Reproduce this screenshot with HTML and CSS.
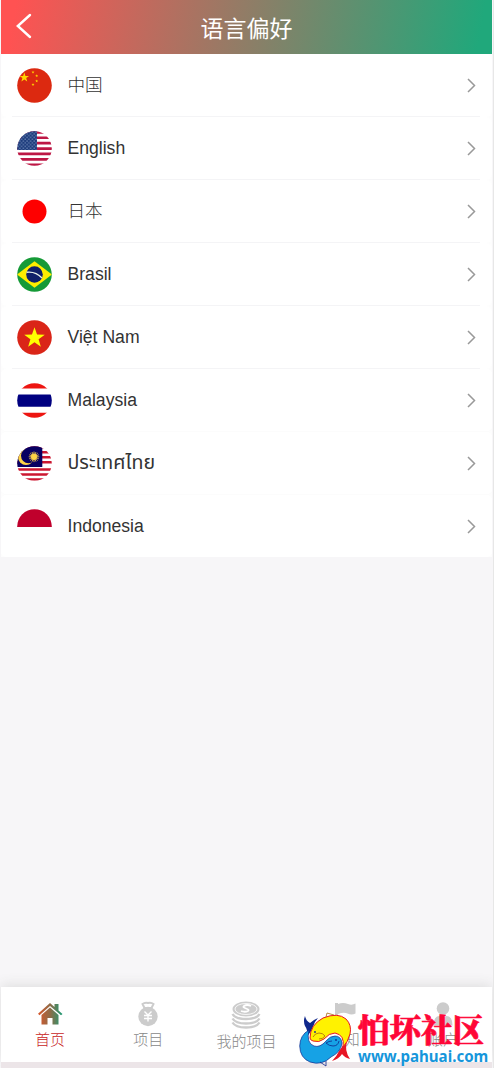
FILE: index.html
```html
<!DOCTYPE html>
<html lang="zh-CN">
<head>
<meta charset="utf-8">
<title>语言偏好</title>
<link rel="stylesheet" href="styles.css">
</head>
<body>
<svg class="defs" width="0" height="0">
  <defs>
    <clipPath id="round"><circle cx="17.5" cy="17.5" r="17.3"/></clipPath>
    <path id="star" d="M0-10 2.35-3.24 9.5-3.09 3.8 1.24 5.88 8.1 0 4-5.88 8.1-3.8 1.24-9.5-3.09-2.35-3.24Z"/>
    <path id="chev" d="M1 1 7.5 7.5 1 14"/>
    <pattern id="dots" width="3.6" height="3.6" patternUnits="userSpaceOnUse"><circle cx="1" cy="1" r=".65" fill="#a9bfe0"/><circle cx="2.8" cy="2.8" r=".65" fill="#a9bfe0"/></pattern>
    <linearGradient id="homeFill"><stop offset="0" stop-color="#d9572c"/><stop offset=".5" stop-color="#8d6c48"/><stop offset="1" stop-color="#1b9c75"/></linearGradient>
  </defs>
</svg>
<div class="app">
  <header class="header">
    <svg class="back" width="18" height="28" viewBox="0 0 18 28"><path d="M15 3 2.800 14 15 25"/></svg>
    <h1 class="title">语言偏好</h1>
  </header>
  <main class="list">
    <div class="row">
      <svg class="flag" viewBox="0 0 35 35"><g clip-path="url(#round)"><path fill="#dc2910" d="M0 0h35v35H0z"/><g fill="#ffd500"><use href="#star" transform="translate(7.300 9.500) scale(.5)"/><use href="#star" transform="translate(16 4.200) scale(.16)"/><use href="#star" transform="translate(19.700 7.800) scale(.16)"/><use href="#star" transform="translate(19.700 13) scale(.16)"/><use href="#star" transform="translate(16 16.500) scale(.16)"/></g></g></svg>
      <span class="name">中国</span><svg class="arrow" viewBox="0 0 9 15"><use href="#chev"/></svg>
    </div>
    <div class="row">
      <svg class="flag" viewBox="0 0 35 35"><g clip-path="url(#round)"><path fill="#fff" d="M0 0h35v35H0z"/><path stroke="#bd1745" stroke-width="2.700" d="M0 1.350h35M0 6.750h35M0 12.150h35M0 17.550h35M0 22.950h35M0 28.350h35M0 33.750h35"/><path fill="#1d3c7c" d="M0 0h20v18.900H0z"/><path fill="url(#dots)" d="M0 0h20v18.900H0z"/></g></svg>
      <span class="name">English</span><svg class="arrow" viewBox="0 0 9 15"><use href="#chev"/></svg>
    </div>
    <div class="row">
      <svg class="flag" viewBox="0 0 35 35"><circle cx="17.500" cy="17.500" r="12" fill="#fe0000"/></svg>
      <span class="name">日本</span><svg class="arrow" viewBox="0 0 9 15"><use href="#chev"/></svg>
    </div>
    <div class="row">
      <svg class="flag" viewBox="0 0 35 35"><g clip-path="url(#round)"><path fill="#159a37" d="M0 0h35v35H0z"/><path fill="#ffed00" d="M17.500 4.300 35 17.500 17.500 30.700 0 17.500z"/><circle cx="17.500" cy="17.500" r="8.300" fill="#10206a"/><path fill="none" stroke="#e6efe8" stroke-width="1.400" d="M9.600 15.300q9-1.200 15.400 5.700"/></g></svg>
      <span class="name">Brasil</span><svg class="arrow" viewBox="0 0 9 15"><use href="#chev"/></svg>
    </div>
    <div class="row">
      <svg class="flag" viewBox="0 0 35 35"><g clip-path="url(#round)"><path fill="#da2518" d="M0 0h35v35H0z"/><use href="#star" fill="#ff0" transform="translate(17.500 18) scale(1.080)"/></g></svg>
      <span class="name">Việt Nam</span><svg class="arrow" viewBox="0 0 9 15"><use href="#chev"/></svg>
    </div>
    <div class="row faint">
      <svg class="flag" viewBox="0 0 35 35"><g clip-path="url(#round)"><path fill="#fff" d="M0 0h35v35H0z"/><path fill="#ed1511" d="M0 0h35v5.500H0zM0 29.800h35V35H0z"/><path fill="#000080" d="M0 11.500h35v12.300H0z"/></g></svg>
      <span class="name">Malaysia</span><svg class="arrow" viewBox="0 0 9 15"><use href="#chev"/></svg>
    </div>
    <div class="row faint">
      <svg class="flag" viewBox="0 0 35 35"><g clip-path="url(#round)"><path fill="#fff" d="M0 0h35v35H0z"/><path stroke="#cc1730" stroke-width="2.500" d="M0 1.250h35M0 6.250h35M0 11.250h35M0 16.250h35M0 23.500h35M0 28.500h35M0 33.500h35"/><path fill="#080062" d="M0 0h25.300v21H0z"/><circle cx="9" cy="11" r="8" fill="#ffd447"/><circle cx="11.500" cy="9.800" r="7.500" fill="#080062"/><g stroke="#ffd447" stroke-width=".8"><circle cx="17" cy="10.800" r="2.800" fill="#ffd447"/><path d="M17 5.500v10.600M11.700 10.800h10.600M13.200 7l7.600 7.600M13.200 14.600 20.800 7M15 6l4 9.600M12.200 8.800l9.600 4M12.200 12.800l9.600-4M15 15.600l4-9.600"/></g></g></svg>
      <span class="name thai">ประเทศไทย</span><svg class="arrow" viewBox="0 0 9 15"><use href="#chev"/></svg>
    </div>
    <div class="row faint">
      <svg class="flag" viewBox="0 0 35 35"><g clip-path="url(#round)"><path fill="#c0002c" d="M0 0h35v18H0z"/></g></svg>
      <span class="name">Indonesia</span><svg class="arrow" viewBox="0 0 9 15"><use href="#chev"/></svg>
    </div>
  </main>
  <nav class="tabs">
    <div class="tab active"><svg width="26" height="26" viewBox="0 0 26 26"><path fill="url(#homeFill)" d="M1 12.700 13 2l4.500 4V3h4v6.500l4 3.500-1.500 1.300L13 5 2.500 14.300zM4.500 14 13 6.500l8.500 7.500v9.500H15.500V17h-5v6.500h-6z"/></svg><span>首页</span></div>
    <div class="tab"><svg width="26" height="26" viewBox="0 0 26 26"><path d="M9.500 7 7.500 3q2.500-2 5.500-1 3-1 5.500 1l-2 4z" fill="none" stroke="#ccc" stroke-width="2"/><circle cx="13" cy="15.500" r="9.700" fill="#ccc"/><path d="M9.500 10.500 13 14l3.500-3.500M13 14v6.500M9 14.500h8M9 17.500h8" fill="none" stroke="#fff" stroke-width="1.400"/></svg><span>项目</span></div>
    <div class="tab"><svg width="30" height="28" viewBox="0 0 30 28"><ellipse cx="15" cy="8" rx="13.500" ry="7.500" fill="#ccc"/><ellipse cx="15" cy="8" rx="11" ry="5.500" fill="none" stroke="#fff" stroke-width=".8"/><path d="M20 5q-4-2-7 0c-3 2 7 3 4 5q-3 1.500-7 0" fill="none" stroke="#fff" stroke-width="1.800"/><path d="M1.500 13q3 5 13.500 5t13.500-5M1.500 17.500q3 5 13.500 5t13.500-5M1.500 21.500q3 5 13.500 5t13.500-5" fill="none" stroke="#ccc" stroke-width="2.400"/></svg><span>我的项目</span></div>
    <div class="tab"><svg width="26" height="26" viewBox="0 0 26 26"><path fill="#ccc" d="M3 2h3v22H3zM6 3q5-2 10 0 4 1.500 7.500-.5v10q-4 2-8 0-4-1.500-9.500.5z"/></svg><span>通知</span></div>
    <div class="tab"><svg width="26" height="26" viewBox="0 0 26 26"><circle cx="13" cy="7.500" r="6.300" fill="#ccc"/><path fill="#ccc" d="M3.500 24.500q0-9.500 6-9.500 3.500 1.500 7 0 6 0 6 9.500z"/></svg><span>账户</span></div>
  </nav>
  <div class="base"></div>
  <div class="brand">
    <svg class="fish" width="58" height="56" viewBox="0 0 58 56">
      <path fill="#fff" d="M10 20 24 10 45 12 48 31 30 44 5 42z"/>
      <path fill="#10288c" d="M8 24Q9 18 6 14 4 9 6 4q1 5 5 7 3-3 8-5-4 4-5 9-1 4-6 9z"/>
      <path fill="#e71524" d="M48 30q-3 8 3 17-5-1-8-5-3 5-10 7 5-5 7-10 3-5 8-9z"/>
      <path fill="#fff200" stroke="#e71524" d="M11 26Q11 13 24 6 39 0 47 7q6 6 4 15-2 8-7 13 2-12-8-14-6 0-11 6-5 4-11 2-3-1-3-3z"/>
      <path fill="#16a2e5" stroke="#10288c" stroke-width=".7" d="M10 18Q1 23 .7 34 1 46 11 50q12 4 21-5 10-5 11-14-1-7-7-7-5 0-9 5-6 7-12 5-8-3-5-16z"/>
      <path fill="none" stroke="#a76a12" stroke-width=".8" d="M14 25q2-4 6-4 4 0 6 3-2 3-6 3M27 5l1-4 7 2"/>
      <path fill="none" stroke="#10288c" stroke-width=".8" d="M40 29q-1 5-6 5-4 0-7-3 3-2 6-2M21 50l6 4v-5"/>
      <circle cx="16" cy="20" r=".9" fill="#10288c"/><circle cx="37" cy="28" r=".9" fill="#10288c"/>
    </svg>
    <div class="words"><strong>怕坏社区</strong><span>www.pahuai.com</span></div>
  </div>
</div>
</body>
</html>
```
FILE: styles.css
```css
* { box-sizing: border-box; }
body { margin: 0; background: #fff; font-family: "Liberation Sans", "Noto Sans CJK SC", sans-serif; color: #333; }
.defs { position: absolute; }
.app { position: relative; width: 494px; height: 1068px; display: flex; flex-direction: column; padding: 0 1px; background: #f7f6f8; border-right: 1px solid #e7e7e7; overflow: hidden; }
.header { flex: none; height: 54px; display: grid; grid-template-columns: 60px 1fr 60px; align-items: center; background: linear-gradient(100deg, #ff5252 3%, #20a87b 97%); }
.back { margin: 0 0 2px 14px; fill: none; stroke: #fff; stroke-width: 2.400; stroke-linecap: round; }
.title { margin: 3px 0 0; text-align: center; font-size: 23px; line-height: 30px; font-weight: 400; color: #fff; }
.list { flex: none; display: flex; flex-direction: column; background: #fdfdfd; }
.row { height: 63px; display: flex; align-items: center; padding: 0 16px 0 15.500px; background: linear-gradient(#f4f4f6, #f4f4f6) 11px 100% / 468px 1.500px no-repeat #fff; border-radius: 5px; }
.row.faint { padding-top: 1px; background: #fff; border-bottom: 1px solid #fcfcfc; }
.row:last-child { height: 62px; border-bottom: 0; }
.flag { width: 35px; height: 35px; flex: none; }
.name { flex: 1; margin: -2px 0 0 16px; font-size: 17.600px; line-height: 26px; font-weight: 300; }
.row.faint .name { margin-top: -1px; }
.row.faint .thai { margin-top: -1px; font-family: "Noto Sans Thai", "Noto Sans", sans-serif; font-size: 19.600px; font-weight: 400; }
.arrow { width: 9px; height: 15px; fill: none; stroke: #999; stroke-width: 1.500; }
.tabs { flex: none; height: 75px; margin-top: auto; display: grid; grid-template-columns: repeat(5, 1fr); background: #fff; box-shadow: 0 -2px 12px #dedede; }
.tab { display: flex; flex-direction: column; align-items: center; padding-top: 14px; font-size: 15px; line-height: 22px; font-weight: 300; color: #888; }
.tab span { margin-top: 2px; }
.tab.active { color: #c82525; }
.base { flex: none; height: 6px; background: #ece5e8; }
.brand { position: absolute; left: 299px; top: 1012px; display: flex; }
.fish { margin-right: 1px; flex: none; }
.words { display: flex; flex-direction: column; }
.words strong { font: 900 31.500px/34px "Noto Serif CJK SC", "Noto Sans CJK SC", serif; color: #ff0637; -webkit-text-stroke: .6px #ff0637; white-space: nowrap; }
.words span { font: 700 15.100px/20px "Noto Sans", sans-serif; color: #1696db; white-space: nowrap; }
```
